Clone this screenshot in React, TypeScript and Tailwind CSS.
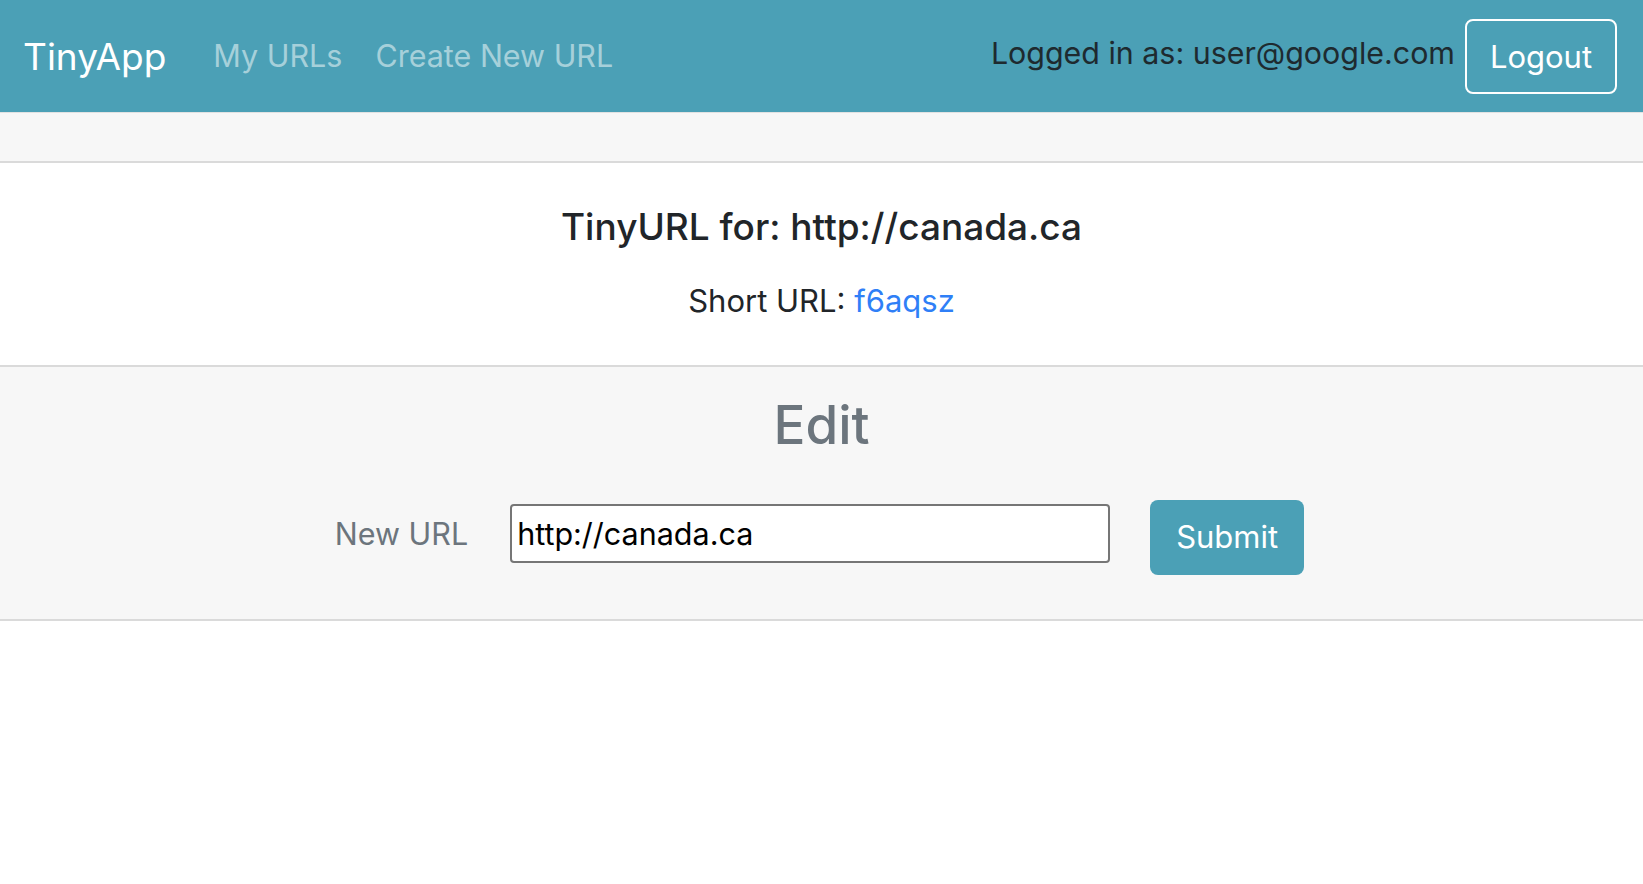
import React from 'react';

// ── TinyApp: edit URL page ──────────────────────────────────────────────────

const Navbar: React.FC = () => (
    <nav className="h-[112px] bg-[#4ba0b6] flex items-center pl-[23px] pr-[26px]">
        <a className="text-[37px] text-white leading-none mr-[47px]">TinyApp</a>
        <a className="text-[30.5px] text-[#a6d0da] leading-none mr-[33px]">My URLs</a>
        <a className="text-[30.5px] text-[#a6d0da] leading-none">Create New URL</a>
        <div className="ml-auto flex items-center gap-[10px]">
            <span className="text-[30.4px] text-[#1e2a2f] leading-none -mt-[6px]">Logged in as: user@google.com</span>
            <button className="w-[152px] h-[75px] border-2 border-white rounded-[8px] text-[31px] text-white leading-none">
                Logout
            </button>
        </div>
    </nav>
);

export default function App() {
    return (
        <div className="min-h-screen bg-white" style={{ fontFamily: 'Inter, "Noto Sans", sans-serif' }}>
            <Navbar />

            <div className="border-t border-[#e2e2e2]">
                <div className="h-[50px] bg-[#f7f7f7] border-b-2 border-[#dadada]" />

                <div className="bg-white text-center pt-[40px] pb-[40px]">
                    <h5 className="text-[37px] leading-[48px] font-medium text-[#212529]">TinyURL for: http://canada.ca</h5>
                    <p className="mt-[26px] text-[31px] leading-[48px] text-[#212529]">
                        Short URL: <a className="text-[#2f7ff7]">f6aqsz</a>
                    </p>
                </div>

                <div className="bg-[#f7f7f7] border-t-2 border-b-2 border-[#dadada] pt-[20px] pb-[44px] text-center">
                    <h2 className="text-[53px] leading-[77px] font-medium text-[#6c757d]">Edit</h2>
                    <form className="mt-[36px] flex items-start justify-center pr-[4px]" onSubmit={e => e.preventDefault()}>
                        <label className="mt-[11px] text-[30.5px] text-[#6c757d] mr-[42px]">New URL</label>
                        <input
                            type="text"
                            defaultValue="http://canada.ca"
                            className="mt-[4px] w-[600px] h-[59px] border-2 border-[#767676] rounded-[4px] bg-white px-[5px] text-[30.5px] text-black outline-none"
                        />
                        <button className="ml-[40px] w-[154px] h-[75px] rounded-[8px] bg-[#4ba0b6] text-white text-[31px]">
                            Submit
                        </button>
                    </form>
                </div>
            </div>
        </div>
    );
}
